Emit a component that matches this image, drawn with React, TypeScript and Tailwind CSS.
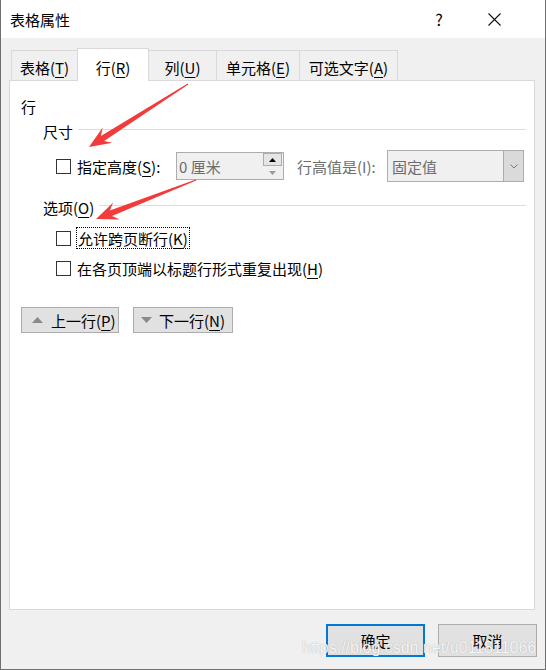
const tabs = [
  { label: '表格', key: 'T', w: 'w-[67px]', active: false },
  { label: '行', key: 'R', w: 'w-[72px]', active: true },
  { label: '列', key: 'U', w: 'w-[69px]', active: false },
  { label: '单元格', key: 'E', w: 'w-[84px]', active: false },
  { label: '可选文字', key: 'A', w: 'w-[99px]', active: false },
]

function Key({ label, k }: { label: string; k: string }) {
  return (
    <span className="whitespace-nowrap">
      {label}(<u className="underline-offset-[3px]">{k}</u>)
    </span>
  )
}

function CheckBox() {
  return <span className="block h-[15px] w-[15px] shrink-0 border border-[#333333] bg-white" />
}

function Section({ children }: { children: React.ReactNode }) {
  return (
    <div className="mt-[15px] flex h-[20px] items-center pl-[33px] pr-[8px]">
      <span className="leading-none">{children}</span>
      <span className="mb-[3px] ml-[5px] h-px flex-1 bg-[#dcdcdc]" />
    </div>
  )
}

// tapered arrow like a screenshot annotation
function arrow(x1: number, y1: number, x2: number, y2: number) {
  const dx = x2 - x1
  const dy = y2 - y1
  const len = Math.hypot(dx, dy)
  const ux = dx / len
  const uy = dy / len
  const px = -uy
  const py = ux
  const head = 22
  const base = [x2 - ux * head, y2 - uy * head]
  const neck = [x2 - ux * (head - 6), y2 - uy * (head - 6)]
  const p = (x: number, y: number) => `${x.toFixed(1)},${y.toFixed(1)}`
  return [
    p(x1 + px * 0.6, y1 + py * 0.6),
    p(neck[0] + px * 3, neck[1] + py * 3),
    p(base[0] + px * 9, base[1] + py * 9),
    p(x2, y2),
    p(base[0] - px * 9, base[1] - py * 9),
    p(neck[0] - px * 3, neck[1] - py * 3),
    p(x1 - px * 0.6, y1 - py * 0.6),
  ].join(' ')
}

export default function App() {
  return (
    <div className="relative flex h-[670px] w-[546px] flex-col overflow-hidden border-x border-b border-[#6f6f6f] bg-[#f0f0f0] font-['Noto_Sans_CJK_SC','Noto_Sans',sans-serif] text-[15px] text-black">
      {/* title bar */}
      <div className="flex h-[38px] shrink-0 items-center bg-white pl-[9px] pr-[28px]">
        <span className="flex-1 leading-none">表格属性</span>
        <span className="mr-[9px] flex w-[46px] justify-center text-[16px] leading-none">?</span>
        <span className="flex w-[46px] justify-center">
          <svg width="13" height="13" viewBox="0 0 13 13">
            <path d="M0.5 0.5 L12.5 12.5 M12.5 0.5 L0.5 12.5" stroke="#111" strokeWidth="1.1" />
          </svg>
        </span>
      </div>

      {/* tabs */}
      <div className="mt-[10px] flex h-[32px] items-end pl-[10px]">
        {tabs.map((t, i) => (
          <div
            key={t.key}
            className={
              t.active
                ? `${t.w} relative z-10 -mb-px -ml-px flex h-[33px] items-center justify-center border-x border-t border-[#d9d9d9] bg-white pt-[4px] leading-none`
                : `${t.w} ${i === 0 ? '' : '-ml-px'} flex h-[30px] items-center justify-center border-x border-t border-[#d9d9d9] bg-[#f0f0f0] pt-[3px] leading-none`
            }
          >
            <Key label={t.label} k={t.key} />
          </div>
        ))}
      </div>

      {/* panel */}
      <div className="ml-[8px] h-[530px] w-[526px] shrink-0 border border-[#d9d9d9] bg-white">
        <div className="mt-[15px] flex h-[20px] items-center pl-[11px] leading-none">行</div>

        <div className="mt-[5px] flex h-[20px] items-center pl-[33px] pr-[8px]">
          <span className="leading-none">尺寸</span>
          <span className="mb-[3px] ml-[5px] h-px flex-1 bg-[#dcdcdc]" />
        </div>

        <div className="mt-[9px] flex h-[32px] items-center pl-[46px]">
          <CheckBox />
          <span className="ml-[6px] w-[99px] leading-none">
            <Key label="指定高度" k="S" />:
          </span>
          <div className="flex h-[28px] w-[108px] items-center border border-[#adadad] bg-[#f0f0f0]">
            <span className="flex-1 pl-[2px] leading-none text-[#6d6d6d]">0 厘米</span>
            <div className="mr-[1px] flex h-[26px] w-[19px] flex-col">
              <span className="flex h-[13px] items-center justify-center border border-[#adadad] bg-[#e5e5e5]">
                <svg width="7" height="4" viewBox="0 0 7 4">
                  <path d="M0 4 L3.5 0 L7 4 Z" fill="#000" />
                </svg>
              </span>
              <span className="flex h-[13px] items-center justify-center bg-[#f0f0f0]">
                <svg width="7" height="4" viewBox="0 0 7 4">
                  <path d="M0 0 L3.5 4 L7 0 Z" fill="#9a9a9a" />
                </svg>
              </span>
            </div>
          </div>
          <span className="ml-[13px] w-[90px] whitespace-nowrap leading-none text-[#6d6d6d]">行高值是(I):</span>
          <div className="flex h-[32px] w-[137px] items-stretch border border-[#adadad] bg-[#f0f0f0]">
            <span className="flex flex-1 items-center pl-[4px] leading-none text-[#6d6d6d]">固定值</span>
            <span className="flex w-[20px] items-center justify-center border-l border-[#adadad] bg-[#dadada]">
              <svg width="8" height="5" viewBox="0 0 8 5">
                <path d="M0.5 0.5 L4 4 L7.5 0.5" stroke="#777" fill="none" strokeWidth="1" />
              </svg>
            </span>
          </div>
        </div>

        <Section>
          <Key label="选项" k="O" />
        </Section>

        <div className="mt-[10px] flex h-[22px] items-center pl-[46px]">
          <CheckBox />
          <span className="ml-[5px] flex h-[22px] items-center border border-dotted border-black px-px leading-none">
            <Key label="允许跨页断行" k="K" />
          </span>
        </div>

        <div className="mt-[8px] flex h-[22px] items-center pl-[46px]">
          <CheckBox />
          <span className="ml-[6px] leading-none">
            <Key label="在各页顶端以标题行形式重复出现" k="H" />
          </span>
        </div>

        <div className="mt-[28px] flex gap-[14px] pl-[11px]">
          <button className="flex h-[26px] w-[98px] items-center border border-[#adadad] bg-[#e1e1e1] pl-[10px] leading-none">
            <svg width="11" height="6" viewBox="0 0 11 6">
              <path d="M0 6 L5.5 0 L11 6 Z" fill="#8a8a8a" />
            </svg>
            <span className="ml-[8px]">
              <Key label="上一行" k="P" />
            </span>
          </button>
          <button className="flex h-[26px] w-[100px] items-center border border-[#adadad] bg-[#e1e1e1] pl-[7px] leading-none">
            <svg width="11" height="6" viewBox="0 0 11 6">
              <path d="M0 0 L5.5 6 L11 0 Z" fill="#8a8a8a" />
            </svg>
            <span className="ml-[7px]">
              <Key label="下一行" k="N" />
            </span>
          </button>
        </div>
      </div>

      {/* footer */}
      <div className="flex justify-end gap-[13px] pr-[8px] pt-[14px]">
        <button className="flex h-[33px] w-[99px] items-center justify-center border-2 border-[#0078d7] bg-[#e1e1e1] leading-none">
          确定
        </button>
        <button className="flex h-[33px] w-[99px] items-center justify-center border border-[#adadad] bg-[#e1e1e1] leading-none">
          取消
        </button>
      </div>

      {/* watermark */}
      <span className="pointer-events-none absolute left-[301px] top-[640px] font-['Liberation_Sans',sans-serif] text-[16px] leading-none text-white/90 [text-shadow:0_0_1px_#9a9a9a]">
        https://blog.csdn.net/u011811066
      </span>

      {/* annotation arrows */}
      <svg className="pointer-events-none absolute left-0 top-0" width="546" height="670">
        <polygon points={arrow(187, 84, 88, 147)} fill="#f23b3b" />
        <polygon points={arrow(195, 180, 95, 219)} fill="#f23b3b" />
      </svg>
    </div>
  )
}
